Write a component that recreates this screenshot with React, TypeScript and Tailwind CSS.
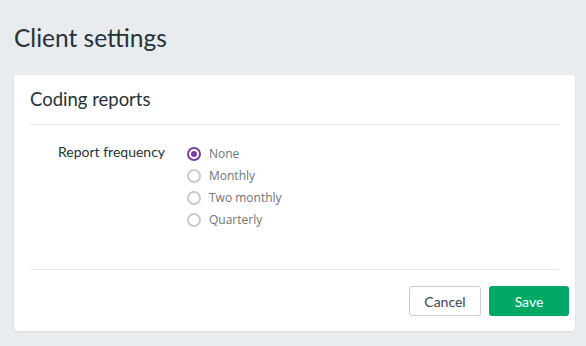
import React, { useState } from "react";

const options = ["None", "Monthly", "Two monthly", "Quarterly"];

const App = () => {
  const [frequency, setFrequency] = useState<string>("None");

  return (
    <div className="min-h-[346px] w-full bg-[#e9ecef] pl-[14px] pr-[11px] pt-[22px] pb-[15px] font-['Lato',sans-serif]">
      <h1 className="text-[24.5px] leading-[32px] text-[#263238]">Client settings</h1>

      <div className="mt-[21px] rounded-[4px] bg-white px-4 shadow-[0_1px_2px_rgba(0,0,0,0.08)]">
        <div className="flex h-[50px] items-center border-b border-[#e5e7ea]">
          <h2 className="text-[18.5px] text-[#263238]">Coding reports</h2>
        </div>

        <div className="flex pt-[18px] pl-[28px] pb-[38px]">
          <div className="w-[129px] text-[14px] leading-[18px] text-[#263238]">
            Report frequency
          </div>
          <div className="flex flex-col">
            {options.map((option) => {
              const selected = frequency === option;
              return (
                <label
                  key={option}
                  className="flex h-[22px] cursor-pointer items-center gap-[8px]"
                  onClick={() => setFrequency(option)}
                >
                  <span
                    className={
                      selected
                        ? "flex h-[14px] w-[14px] items-center justify-center rounded-full border-2 border-[#7a3ea4]"
                        : "h-[14px] w-[14px] rounded-full border-2 border-[#c8cacc]"
                    }
                  >
                    {selected && <span className="h-[6px] w-[6px] rounded-full bg-[#7a3ea4]" />}
                  </span>
                  <span className="font-['Open_Sans',sans-serif] text-[12px] text-[#6f7479]">
                    {option}
                  </span>
                </label>
              );
            })}
          </div>
        </div>

        <div className="border-t border-[#e5e7ea]" />
        <div className="-mr-[10px] flex justify-end gap-2 pt-4 pb-[15px]">
          <button className="h-[30px] w-[72px] rounded-[3px] border border-[#c9cdd1] bg-white text-[14px] text-[#3c4650]">
            Cancel
          </button>
          <button className="h-[30px] w-[80px] rounded-[3px] bg-[#00a865] text-[14px] text-white">
            Save
          </button>
        </div>
      </div>
    </div>
  );
};

export default App;
